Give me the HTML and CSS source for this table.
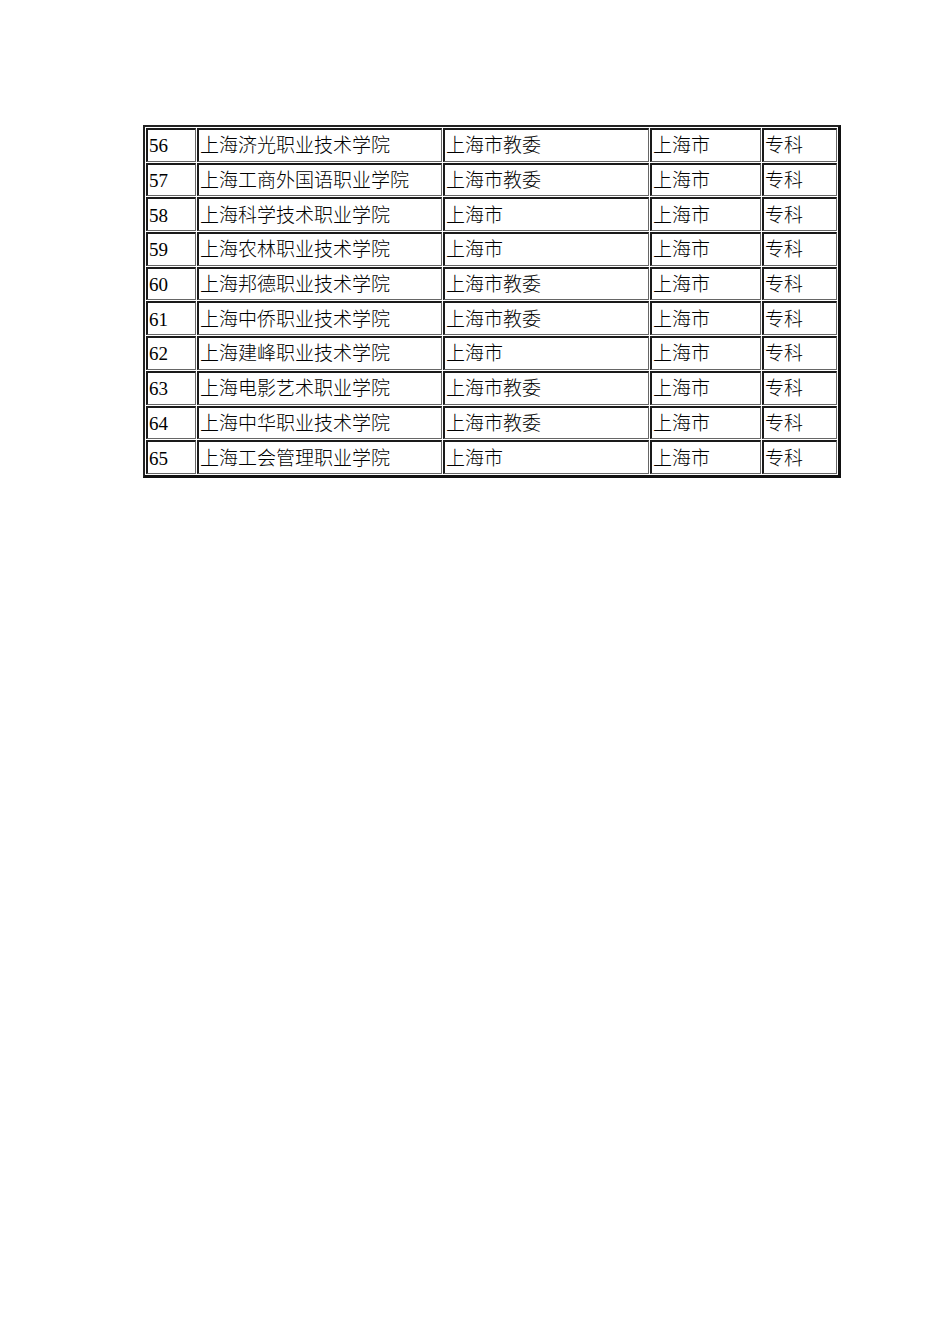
FILE: index.html
```html
<!DOCTYPE html>
<html lang="zh">
<head>
<meta charset="utf-8">
<title>上海高校名单</title>
<link rel="stylesheet" href="styles.css">
</head>
<body>
<div class="page">
<table class="list">
<colgroup>
<col class="c1"><col class="c2"><col class="c3"><col class="c4"><col class="c5">
</colgroup>
<tbody>
<tr><td>56</td><td>上海济光职业技术学院</td><td>上海市教委</td><td>上海市</td><td>专科</td></tr>
<tr><td>57</td><td>上海工商外国语职业学院</td><td>上海市教委</td><td>上海市</td><td>专科</td></tr>
<tr><td>58</td><td>上海科学技术职业学院</td><td>上海市</td><td>上海市</td><td>专科</td></tr>
<tr><td>59</td><td>上海农林职业技术学院</td><td>上海市</td><td>上海市</td><td>专科</td></tr>
<tr><td>60</td><td>上海邦德职业技术学院</td><td>上海市教委</td><td>上海市</td><td>专科</td></tr>
<tr><td>61</td><td>上海中侨职业技术学院</td><td>上海市教委</td><td>上海市</td><td>专科</td></tr>
<tr><td>62</td><td>上海建峰职业技术学院</td><td>上海市</td><td>上海市</td><td>专科</td></tr>
<tr><td>63</td><td>上海电影艺术职业学院</td><td>上海市教委</td><td>上海市</td><td>专科</td></tr>
<tr><td>64</td><td>上海中华职业技术学院</td><td>上海市教委</td><td>上海市</td><td>专科</td></tr>
<tr><td>65</td><td>上海工会管理职业学院</td><td>上海市</td><td>上海市</td><td>专科</td></tr>
</tbody>
</table>
</div>
</body>
</html>
```
FILE: styles.css
```css
html, body {
  margin: 0;
  padding: 0;
  background: #ffffff;
}
.page {
  width: 950px;
  height: 1344px;
  padding: 125px 0 0 143px;
  box-sizing: border-box;
}
.list {
  table-layout: fixed;
  width: 698px;
  border-collapse: separate;
  border-spacing: 1px;
  border-top: 2px solid #222;
  border-left: 2px solid #222;
  border-right: 3px solid #111;
  border-bottom: 3px solid #111;
  font-family: "Liberation Serif", "Noto Sans CJK SC", serif;
  font-size: 19px;
  color: #000;
}
.c1 { width: 50px; }
.c2 { width: 245px; }
.c3 { width: 206px; }
.c4 { width: 111px; }
.c5 { width: 75px; }
.list td {
  height: 33.7px;
  box-sizing: border-box;
  padding: 1px 0 0 1px;
  border-top: 2px solid #1a1a1a;
  border-left: 2px solid #1a1a1a;
  border-right: 1px solid #666;
  border-bottom: 1px solid #666;
  white-space: nowrap;
  overflow: hidden;
  vertical-align: middle;
  font-weight: 300;
  line-height: 1;
}
```
